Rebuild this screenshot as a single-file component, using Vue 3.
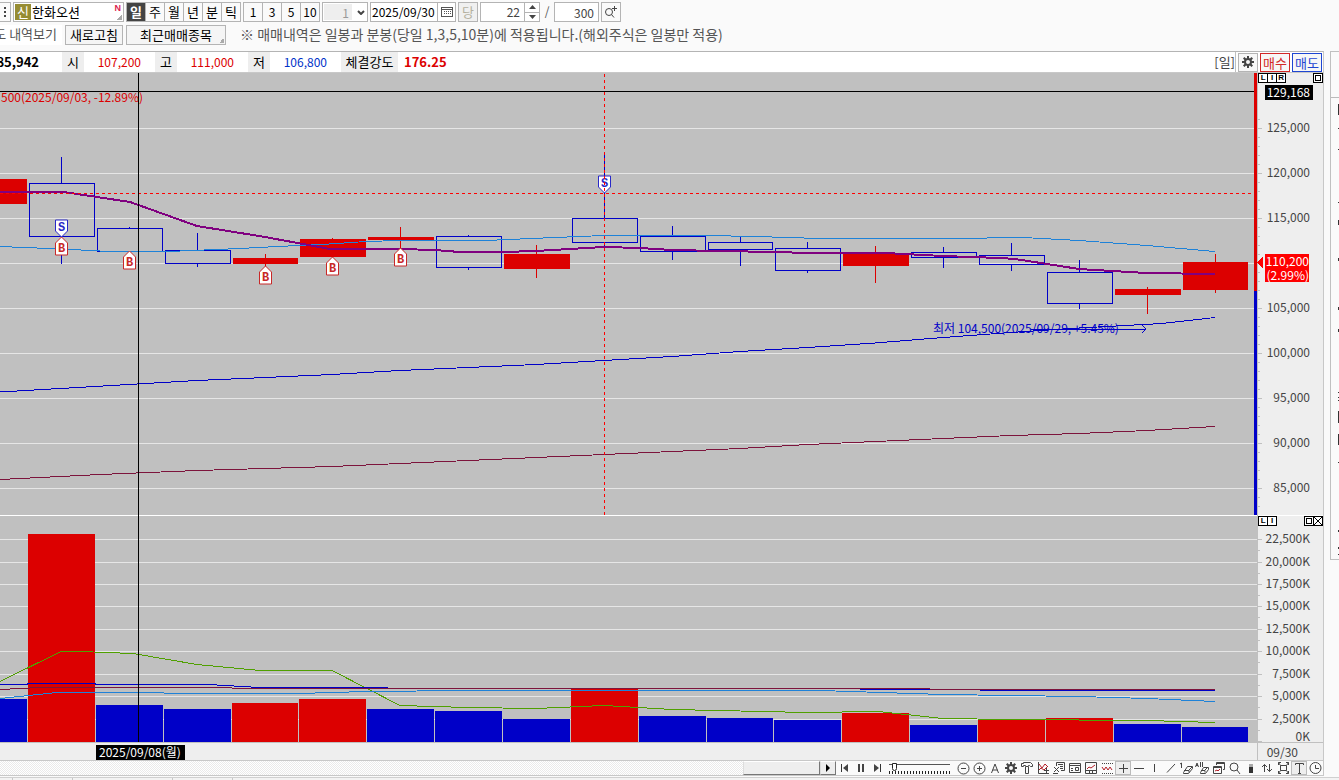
<script setup>
const periods = ['일', '주', '월', '년', '분', '틱']
const minutes = ['1', '3', '5', '10']
const quotes = [
  { label: '시', value: '107,200', tone: 'up' },
  { label: '고', value: '111,000', tone: 'up' },
  { label: '저', value: '106,800', tone: 'down' },
]

// x, width, body top, body bottom, wick x, high, low, direction
const candles = [
  [0, 27, 179, 204, 0, 179, 204, 'up'],
  [29, 66, 183, 237, 61, 157, 264, 'down'],
  [97, 66, 228, 252, 129, 227, 252, 'down'],
  [165, 66, 250, 264, 197, 233, 267, 'down'],
  [233, 65, 258, 264, 265, 254, 268, 'up'],
  [300, 66, 239, 257, 332, 238, 257, 'up'],
  [368, 66, 237, 240, 400, 227, 250, 'up'],
  [436, 66, 236, 268, 468, 235, 270, 'down'],
  [504, 66, 254, 269, 536, 245, 278, 'up'],
  [572, 66, 218, 243, 604, 154, 247, 'down'],
  [640, 66, 236, 252, 672, 226, 260, 'down'],
  [708, 65, 242, 250, 740, 237, 266, 'down'],
  [775, 66, 248, 271, 807, 242, 273, 'down'],
  [843, 66, 253, 266, 875, 246, 283, 'up'],
  [911, 66, 252, 258, 943, 247, 268, 'down'],
  [979, 66, 255, 265, 1011, 243, 271, 'down'],
  [1047, 66, 272, 304, 1079, 260, 309, 'down'],
  [1115, 66, 289, 295, 1147, 287, 314, 'up'],
  [1183, 65, 262, 290, 1215, 254, 293, 'up'],
].map(([x, w, top, bottom, cx, high, low, dir]) => ({ x, w, top, bottom, cx, high, low, dir }))

const volumes = [
  [0, 27, 699, 'down'], [28, 67, 534, 'up'], [96, 67, 705, 'down'], [164, 67, 709, 'down'],
  [232, 66, 703, 'up'], [299, 67, 699, 'up'], [367, 67, 709, 'down'], [435, 67, 711, 'down'],
  [503, 67, 719, 'down'], [571, 67, 689, 'up'], [639, 67, 716, 'down'], [707, 66, 718, 'down'],
  [774, 67, 720, 'down'], [842, 67, 713, 'up'], [910, 67, 725, 'down'], [978, 67, 720, 'up'],
  [1046, 67, 718, 'up'], [1114, 67, 724, 'down'], [1182, 66, 727, 'down'],
].map(([x, w, y, dir]) => ({ x, w, y, dir }))

const priceTicks = ['125,000', '120,000', '115,000', '', '105,000', '100,000', '95,000', '90,000', '85,000']
  .map((label, i) => ({ label, y: 128 + i * 45 }))
const minorTicks = Array.from({ length: 45 }, (_, i) => 119 + i * 9).filter((y) => y < 512)
const volumeTicks = [
  ['22,500K', 539], ['20,000K', 562], ['17,500K', 584], ['15,000K', 606], ['12,500K', 629],
  ['10,000K', 651], ['7,500K', 674], ['5,000K', 696], ['2,500K', 719],
].map(([label, y]) => ({ label, y }))

const markers = [
  { kind: 'B', x: 61, y: 237 },
  { kind: 'S', x: 61, y: 237 },
  { kind: 'B', x: 129, y: 251 },
  { kind: 'B', x: 265, y: 266 },
  { kind: 'B', x: 332, y: 257 },
  { kind: 'B', x: 400, y: 248 },
  { kind: 'S', x: 604, y: 193 },
]
const slivers = [[103, 11], [127, 1], [148, 1], [201, 1], [219, 5], [257, 3], [306, 3], [328, 3], [391, 1], [396, 1], [399, 1], [410, 12], [433, 11], [461, 1], [529, 2], [546, 2], [553, 1]]
const gear = 'M5 0h2v2l1 .4L9.500 1 11 2.500 9.600 4 10 5h2v2h-2l-.4 1L11 9.500 9.500 11 8 9.600 7 10v2H5v-2l-1-.4L2.500 11 1 9.500 2.400 8 2 7H0V5h2l.4-1L1 2.500 2.500 1 4 2.400 5 2zM6 4a2 2 0 1 0 0 4a2 2 0 0 0 0-4z'
</script>

<template>
  <div class="app">
    <header class="controls">
      <div class="row tight">
        <button class="box grip" aria-label="메뉴"><i></i><i></i><i></i></button>
        <button class="box stock">
          <span class="credit">신</span><span>한화오션</span><sup>N</sup><span class="corner"></span>
        </button>
        <div class="group">
          <button v-for="(p, i) in periods" :key="p" class="seg" :class="{ active: i === 0 }">{{ p }}</button>
        </div>
        <div class="group">
          <button v-for="m in minutes" :key="m" class="seg num">{{ m }}</button>
        </div>
        <div class="box combo">
          <select aria-label="주기"><option>1</option></select>
          <svg width="8" height="5" viewBox="0 0 8 5"><path d="M1 1l3 3 3-3" fill="none" stroke="#444" stroke-width="2" /></svg>
        </div>
        <div class="box date">
          <input aria-label="조회일자" value="2025/09/30" />
          <button aria-label="달력">
            <svg width="12" height="12" viewBox="0 0 12 12" fill="none" stroke="#555" shape-rendering="crispEdges">
              <rect x=".5" y="1.500" width="11" height="9" /><path d="M0 3.500h12M3 5.500h1m1 0h1m1 0h1m1 0h1M3 7.500h1m1 0h1m1 0h1m1 0h1" />
            </svg>
          </button>
        </div>
        <button class="box today" disabled>당</button>
        <div class="box spin">
          <input aria-label="표시 개수" value="22" />
          <div class="steps">
            <button aria-label="증가"><svg width="7" height="4"><path d="M3.500 0L7 4H0z" fill="#444" /></svg></button>
            <button aria-label="감소"><svg width="7" height="4"><path d="M0 0h7L3.500 4z" fill="#444" /></svg></button>
          </div>
        </div>
        <span class="slash">/</span>
        <input class="box total" aria-label="전체 개수" value="300" />
        <button class="box find" aria-label="확대 조회">
          <svg width="14" height="14" viewBox="0 0 14 14" fill="none" stroke="#444"><circle cx="5" cy="7" r="3.500" /><path d="M7.500 9.500L10 12.500M8 3.500h5M10.500 1v5" /></svg>
        </button>
      </div>
      <div class="row">
        <span class="history">도 내역보기</span>
        <button class="box refresh">새로고침</button>
        <button class="box recent">최근매매종목<span class="corner"></span></button>
        <span class="note">※ 매매내역은 일봉과 분봉(당일 1,3,5,10분)에 적용됩니다.(해외주식은 일봉만 적용)</span>
      </div>
    </header>

    <div class="body">
      <main class="main">
        <div class="info">
          <b class="volume">85,942</b>
          <template v-for="q in quotes" :key="q.label">
            <span class="tag">{{ q.label }}</span><span class="quote" :class="q.tone">{{ q.value }}</span>
          </template>
          <span class="tag wide">체결강도</span><b class="strength">176.25</b>
          <div class="actions">
            <span class="unit">[일]</span>
            <button class="setup" aria-label="설정"><svg width="12" height="12" viewBox="0 0 12 12"><path :d="gear" fill="#444" fill-rule="evenodd" /></svg></button>
            <button class="buy">매수</button>
            <button class="sell">매도</button>
          </div>
        </div>

        <div class="chart">
          <svg class="plot" viewBox="0 73 1323 687" shape-rendering="crispEdges" role="img" aria-label="한화오션 일봉 차트">
            <rect x="0" y="73" width="1257" height="669" class="ground" />
            <rect x="1257" y="73" width="66" height="687" class="axis" />
            <rect x="0" y="742" width="1323" height="18" class="axis" />
            <g class="grid">
              <path v-for="t in priceTicks" :key="t.y" :d="`M0 ${t.y + .5}H1254`" />
              <path v-for="t in volumeTicks" :key="t.y" :d="`M0 ${t.y + .5}H1257`" />
            </g>
            <path d="M0 515.500H1323" stroke="#fff" />

            <g v-for="c in candles" :key="c.x" :class="c.dir">
              <path v-if="c.cx" :d="`M${c.cx + .5} ${c.high}V${c.top}M${c.cx + .5} ${c.bottom}V${c.low}`" class="wick" />
              <rect v-if="c.dir === 'up'" :x="c.x" :y="c.top" :width="c.w" :height="c.bottom - c.top" class="fill" />
              <rect v-else :x="c.x + .5" :y="c.top + .5" :width="c.w - 1" :height="c.bottom - c.top - 1" class="hollow" />
            </g>
            <rect v-for="v in volumes" :key="v.x" :x="v.x" :y="v.y" :width="v.w" :height="742 - v.y" class="fill" :class="v.dir" />

            <g fill="none">
              <polyline stroke="#1e82d8" points="0,246.500 61,249 100,251 180,251 240,248.500 277,246.500 322,244.500 366,241.500 400,240.500 485,240.500 520,239 555,237.500 604,235.500 706,235.500 755,236.500 820,238.500 975,238.500 1000,237.500 1023,237.500 1079,240.500 1147,245.500 1215,251.500" />
              <polyline stroke="#0000c8" points="0,392 129,384.500 197,380.500 265,377.500 332,374.500 400,370.500 468,367.500 536,364.500 604,360.500 672,356.500 740,351.500 808,347.500 875,343 943,337.500 1011,332.500 1070,328.500 1162,323.500 1215,317.500" />
              <polyline stroke="#7d143c" points="0,479.500 100,474.500 197,470.500 332,466.500 400,463.500 468,460.500 604,454.500 672,451.500 740,448.500 808,444.500 943,438.500 1011,435.500 1079,433.500 1147,430.500 1215,426.500" />
              <polyline stroke="#800080" stroke-width="2" points="0,192 64,192 130,202 197,226 265,237 330,249 400,249 434,250 460,252 502,252 536,251 570,249 604,247 640,248 672,250 720,251 775,252 808,253 885,253 943,256 1000,258 1015,259 1079,269 1112,271 1147,273 1215,274" />
              <polyline stroke="#50a000" points="0,681.500 61,651.500 80,651.500 133,653.500 197,664.500 260,670.500 332,670.500 400,705.500 468,707.500 536,708.500 604,705.500 672,709.500 808,712.500 878,711.500 943,718.500 1011,719.500 1147,720.500 1215,722.500" />
              <polyline stroke="#0000c8" points="0,684.500 27,684.500 28,683.500 95,683.500 96,684.500 208,684.500 260,687.500 366,687.500 410,688.500 800,688.500 980,690 1215,690" />
              <polyline stroke="#7d143c" points="0,689.500 40,687.500 231,687.500 233,688.500 880,688.500 980,689.500 1215,689.500" />
              <polyline stroke="#1e82d8" points="0,698.500 57,692.500 163,692.500 165,693.500 298,693.500 366,691.500 468,690.500 820,690.500 943,694.500 1079,696.500 1147,698.500 1215,701.500" />
              <path d="M980 690.500H1215" stroke="#0000c8" />
            </g>

            <path d="M0 193.500H1254" stroke="#f00" stroke-dasharray="3 3" />
            <g v-for="m in markers" :key="m.kind + m.x" :class="['marker', m.kind]" shape-rendering="auto">
              <path v-if="m.kind === 'B'" :d="`M${m.x + .5} ${m.y}l6 6v12h-12v-12z`" />
              <path v-else :d="`M${m.x + .5} ${m.y}l6-6v-11h-12v11z`" />
              <text :x="m.x + .5" :y="m.kind === 'B' ? m.y + 15 : m.y - 6" text-anchor="middle">{{ m.kind }}</text>
            </g>
            <path d="M604.500 74V515" stroke="#f00" stroke-dasharray="3 3" />

            <text x="1" y="102" class="high">500(2025/09/03, -12.89%)</text>
            <text x="933" y="333" class="low">최저 104,500(2025/09/29, +5.45%)</text>
            <path d="M1031 329.500H1146M1142 325l4 4-4 4" fill="none" stroke="#0000c8" />

            <path d="M0 91.500H1257M138.500 73V743" stroke="#000" />
            <rect x="1254" y="73" width="3" height="218" fill="#dc0000" />
            <rect x="1254" y="291" width="3" height="224" fill="#0000c8" />

            <g class="ticks">
              <path d="M1257.500 73V760M0 742.500H1323M1257 741.500h5" />
              <path v-for="y in minorTicks" :key="y" :d="`M1258 ${y + .5}h2`" />
              <path v-for="t in priceTicks" :key="t.y" :d="`M1258 ${t.y + .5}h4`" />
              <path v-for="t in volumeTicks" :key="t.y" :d="`M1258 ${t.y + .5}h4M1258 ${t.y + 11.5}h2`" />
            </g>
            <g class="scale">
              <text v-for="t in priceTicks" :key="t.y" x="1310" :y="t.y + 4">{{ t.label }}</text>
              <text v-for="t in volumeTicks" :key="t.y" x="1310" :y="t.y + 4">{{ t.label }}</text>
              <text x="1310" y="741">0K</text>
              <text x="1298" y="757">09/30</text>
            </g>
            <rect x="1265" y="85" width="48" height="15" />
            <path d="M1257 262.500l6-6v12z" fill="#f00" />
            <rect x="1265" y="254" width="44" height="28" fill="#f00" />
            <g class="scale inverse">
              <text x="1310" y="97">129,168</text>
              <text x="1309" y="266">110,200</text>
              <text x="1309" y="280">(2.99%)</text>
            </g>
            <rect x="96" y="745" width="89" height="16" />
            <text x="99" y="757" class="cursor">2025/09/08(월)</text>
          </svg>
          <div class="pane-tools upper">
            <button>L</button><button>I</button><button>R</button><button class="last" aria-label="최대화"><i></i></button>
          </div>
          <div class="pane-tools lower">
            <button>L</button><button>I</button><button class="last" aria-label="최대화"><i></i></button>
            <button aria-label="닫기"><svg width="8" height="8"><path d="M0 0l8 8M8 0L0 8" stroke="#000" /></svg></button>
          </div>
        </div>

        <div class="toolbar">
          <div class="track"></div>
          <button class="thumb" aria-label="스크롤"></button>
          <button class="arrow" aria-label="오른쪽"><svg width="5" height="8"><path d="M0 0l4 4-4 4z" /></svg></button>
          <div class="play">
            <button aria-label="처음"><svg viewBox="0 0 16 14"><path d="M4.500 3v8" stroke="#333" /><path d="M11 3v8L6 7z" fill="#444" /></svg></button>
            <button aria-label="일시정지"><svg viewBox="0 0 16 14"><path d="M5 3h2v8H5zM9 3h2v8H9z" fill="#444" /></svg></button>
            <button aria-label="끝"><svg viewBox="0 0 16 14"><path d="M11.500 3v8" stroke="#333" /><path d="M5 3v8l5-4z" fill="#444" /></svg></button>
          </div>
          <div class="speed">
            <input type="range" min="0" max="20" value="1" aria-label="속도" />
          </div>
          <div class="icons">
            <button aria-label="축소"><svg viewBox="0 0 16 14"><circle cx="8.500" cy="7.500" r="5.500" /><path d="M6 7.500h5" /></svg></button>
            <button aria-label="확대"><svg viewBox="0 0 16 14"><circle cx="8.500" cy="7.500" r="5.500" /><path d="M6 7.500h5M8.500 5v5" /></svg></button>
            <button aria-label="글자"><svg viewBox="0 0 16 14"><path d="M4.500 12L8 3l3.500 9M5.500 9h5" /></svg></button>
            <button aria-label="환경설정"><svg viewBox="0 0 16 14"><path transform="translate(2 1)" :d="gear" fill="#444" stroke="none" fill-rule="evenodd" /></svg></button>
            <button aria-label="도구"><svg viewBox="0 0 16 14"><path d="M2.500 2.500h2v-1h7l2 2v2h-2l-1-1h-1v1h-3v-1h-2v1h-2zM6.500 6v6.500h3V6" /></svg></button>
            <button aria-label="지표 추가"><svg viewBox="0 0 16 14"><path d="M3.500 1v11.500H14M9 9.500h5M11.500 7v5" /><path class="red" d="M4 3l3 4 3-4 2 2M4 9l2-2 3 2 4-4" /></svg></button>
            <button aria-label="복사"><svg viewBox="0 0 16 14"><path d="M5.500 5V1.500h8v8H10M7 3.500h5M9 5.500h3M9 7.500h3M3 6l5 5M8 6l-5 5M2 12.500h5" /></svg></button>
            <button aria-label="양식"><svg viewBox="0 0 16 14"><path d="M2.500 2.500h11v9h-11zM2 4.500h12M4 7.500h2M4 9.500h2M8.500 6.500h3v3h-3z" /></svg></button>
            <button aria-label="차트"><svg viewBox="0 0 16 14"><path d="M2.500 1.500h11v11h-11zM3 9.500h10M6.500 10v2M9.500 10v2" /><path class="red" d="M4 8l2-2 2 1 4-3" /></svg></button>
            <button aria-label="구간"><svg viewBox="0 0 16 14"><path stroke-dasharray="1 1" d="M3 2.500h11M3 12.500h11" /><path class="red" d="M3 6l2 3 2-3 2 3 2-3 2 3" /></svg></button>
            <button class="on" aria-label="십자선"><svg viewBox="0 0 16 14"><path d="M4 7.500h9M8.500 3v9" /></svg></button>
            <button aria-label="수평선"><svg viewBox="0 0 16 14"><path d="M3 7.500h10" /></svg></button>
            <button aria-label="수직선"><svg viewBox="0 0 16 14"><path d="M7.500 3v8" /></svg></button>
            <button aria-label="추세선"><svg viewBox="0 0 16 14"><path d="M4 11.500L12 3" /></svg></button>
            <button aria-label="하나 지우기"><svg viewBox="0 0 16 14"><path d="M1 3l1.500-1v5M4.500 11.500l4-6h5v2l-4 5h-5zM5 9.500h5v2M10 9l3-3" /></svg></button>
            <button aria-label="모두 지우기"><svg viewBox="0 0 16 14"><path d="M.5 6L2 2l1.500 4M1 4.500h2M5.500 1v5M7.500 1v5M5.500 11.500l3-5h5v2l-3 4h-5zM6 9.500h4v2M10 9l3-3" /></svg></button>
            <button aria-label="창 배열"><svg viewBox="0 0 16 14"><path d="M5.500 4V1.500h8v7H12M6 2.500h7M2.500 5.500h8v7h-8zM3 6.500h7" /><path class="red" d="M4 10l2-1 1 1 2-2" /></svg></button>
            <button aria-label="돋보기"><svg viewBox="0 0 16 14"><circle cx="7" cy="6" r="4" /><path d="M10 9l3 4" /></svg></button>
            <button aria-label="색상"><svg viewBox="0 0 16 14"><path d="M6 3h4v3H6z" fill="#aaa" stroke="none" /><path d="M6 6h4v6H6z" fill="#333" stroke="none" /></svg></button>
            <button aria-label="전환"><svg viewBox="0 0 16 14"><path d="M5.500 11V3.500M3 6l2.500-2.500L8 6M10.500 3v7.500M8 8l2.500 2.500L13 8" /></svg></button>
            <button aria-label="전체화면"><svg viewBox="0 0 16 14"><path d="M3.500 4V1.500H6M11 1.500h2.500V4M13.500 10v2.500H11M6 12.500H3.500V10M5.500 4.500h6v5h-6zM3.500 1.500l2 3M13.500 1.500l-2 3M3.500 12.500l2-3M13.500 12.500l-2-3" /></svg></button>
            <button class="on" aria-label="텍스트"><svg viewBox="0 0 16 14"><path d="M4.500 4V2.500h8V4M8.500 3v9M7 12.500h3" /></svg></button>
            <button aria-label="시간"><svg viewBox="0 0 16 14"><circle cx="8.500" cy="7" r="5.500" /><path d="M8.500 4v3.500H12" /></svg></button>
          </div>
        </div>
      </main>
      <aside class="side">
        <svg width="8" height="508" viewBox="0 51 8 508" shape-rendering="crispEdges">
          <path d="M0 96.500H8" stroke="#bbb" />
          <rect v-for="s in slivers" :key="s[0]" x="7" :y="s[0]" width="1" :height="s[1]" fill="#333" />
        </svg>
      </aside>
    </div>
    <footer class="footer"><i></i><i></i><i></i><i></i></footer>
  </div>
</template>

<style>
body { background: #fafafa; }
</style>

<style scoped>
.app { min-height: 100vh; overflow: hidden; display: flex; flex-direction: column; background: #fafafa; color: #000; font: 13px/18px "Noto Sans CJK KR", sans-serif; }
* { box-sizing: border-box; }
button, input, select { font: inherit; color: inherit; margin: 0; padding: 0; border: 0; border-radius: 0; background: none; outline: 0; }
button { display: flex; align-items: center; justify-content: center; white-space: nowrap; }
.controls { height: 51px; padding-top: 2px; display: flex; flex-direction: column; gap: 3px; }
.row { height: 20px; display: flex; gap: 3px; white-space: nowrap; }
.tight { gap: 2px; }
.box { flex: none; height: 20px; border: 1px solid #b4b4b4; position: relative; }
.grip { width: 11px; border-left: 0; flex-direction: column; gap: 2px; }
.grip i { width: 2px; height: 2px; background: #444; }
.stock { width: 111px; background: #fff; justify-content: flex-start; gap: 1px; padding-left: 1px; }
.credit { width: 16px; height: 16px; line-height: 15px; background: #968c32; color: #fff; }
.stock sup { position: absolute; right: 2px; top: 0; color: #dc1e50; font: bold 9px/10px "Liberation Sans", sans-serif; }
.corner { position: absolute; right: 1px; bottom: 1px; width: 5px; height: 5px; background: linear-gradient(135deg, transparent 50%, #aaa 50%); }
.group { display: flex; border: solid #b4b4b4; border-width: 1px 0 1px 1px; flex: none; }
.seg { width: 19px; border-right: 1px solid #b4b4b4; }
.seg.active { background: #444; color: #fff; font-weight: bold; }
.num, .combo, .date, .spin, .total, .slash { font-size: 12px; }
.combo { width: 46px; display: flex; align-items: center; background: #fff; padding: 1px; }
.combo select { appearance: none; width: 28px; height: 16px; background: #eee; color: #999; padding-right: 3px; text-align: right; text-align-last: right; }
.combo svg { margin-left: 5px; }
.date { width: 86px; display: flex; background: #fff; }
.date input { width: 66px; padding-left: 1px; }
.date button { flex: 1; border-left: 1px solid #b4b4b4; }
.today { width: 20px; background: #f0f0f0; color: #b4b0a0; }
.spin { width: 60px; display: flex; background: #fff; }
.spin input { width: 43px; padding-right: 4px; text-align: right; color: #444; }
.steps { flex: 1; display: flex; flex-direction: column; border-left: 1px solid #b4b4b4; }
.steps button { flex: 1; }
.steps button + button { border-top: 1px solid #b4b4b4; }
.slash { width: 10px; text-align: center; color: #555; }
.total { width: 45px; padding-right: 4px; text-align: right; background: #fff; color: #444; }
.find { width: 20px; }
.history { width: 62px; overflow: hidden; display: flex; justify-content: flex-end; padding-right: 5px; color: #555; background: #fff; }
.refresh { width: 58px; background: #f5f5f5; }
.recent { width: 100px; background: #f5f5f5; }
.note { margin-left: 11px; color: #555; font-size: 14px; }

.body { display: flex; }
.main { flex: 1; min-width: 0; border-top: 1px solid #b4b4b4; border-right: 1px solid #c8c8c8; }
.side { flex: none; width: 9px; height: 509px; margin-left: 6px; border: solid #c0c0c0; border-width: 1px 0 1px 1px; overflow: hidden; }
.side svg { display: block; }
.info { height: 21px; display: flex; background: #fff; border-bottom: 1px solid #c8c8c8; font-size: 12px; line-height: 19px; white-space: nowrap; }
.volume { width: 62px; display: flex; justify-content: flex-end; padding-right: 23px; overflow: hidden; font-size: 13px; }
.tag { width: 22px; text-align: center; background: #eee; font-size: 13px; }
.wide { width: 57px; }
.quote { width: 71px; padding-right: 14px; text-align: right; }
.quote.up, .strength { color: #dc0000; }
.quote.down { color: #0032c8; }
.strength { padding-left: 6px; font-size: 13px; }
.actions { margin-left: auto; display: flex; gap: 2px; }
.unit { border-right: 1px solid #c0c0c0; color: #444; font-size: 13px; }
.setup, .buy, .sell { height: 19px; align-self: center; border: 1px solid #b4b4b4; width: 20px; font-size: 13px; background: #f7f7f7; }
.buy, .sell { width: 30px; }
.buy { color: #d22828; border-color: #d22828; }
.sell { color: #1e46d2; border-color: #1e46d2; margin-right: 1px; }

.chart { position: relative; }
.plot { display: block; width: 100%; height: auto; font-size: 12px; }
.ground { fill: #c0c0c0; }
.axis { fill: #eee; }
.grid path { stroke: #e6e6e6; }
.ticks path { stroke: #c0c0c0; }
.up.fill, .up .fill { fill: #dc0000; }
.up .wick { stroke: #dc0000; }
.down.fill { fill: #0000c8; }
.down .hollow, .down .wick { fill: none; stroke: #0000c8; }
.marker path { fill: #fff; stroke: currentColor; }
.marker text { fill: currentColor; font: bold 12px "Liberation Mono", monospace; }
.B { color: #c82828; }
.S { color: #2828c8; }
.high { fill: #dc0000; }
.low { fill: #0000c8; }
.scale { fill: #444; text-anchor: end; }
.inverse, .cursor { fill: #fff; }
.pane-tools { position: absolute; left: 95.100%; right: 0; display: flex; font: bold 8px/8px "Liberation Sans", sans-serif; }
.upper { top: 0; }
.lower { top: 64.500%; }
.pane-tools button { width: 10px; height: 10px; border: 1px solid #000; background: #fff; margin-right: -1px; overflow: hidden; }
.pane-tools .last { margin-left: auto; }
.upper .last { margin-right: 0; }
.pane-tools button:last-child { margin-right: 0; }
.pane-tools i { width: 6px; height: 6px; border: 1px solid #000; }

.toolbar { height: 16px; display: flex; align-items: center; background: #fafafa; border: solid #c8c8c8; border-width: 1px 0; }
.track { flex: 1; align-self: stretch; background: repeating-conic-gradient(#eaeaea 0 25%, #fff 0 50%) 0 0 / 2px 2px; }
.thumb { width: 77px; }
.arrow { width: 16px; }
.thumb, .arrow { height: 14px; background: #eee; border: 1px solid; border-color: #fff #777 #777 #ddd; }
.play { display: flex; margin-left: 1px; }
.play button, .icons button { width: 16px; height: 14px; }
.play svg, .icons svg { width: 16px; height: 14px; flex: none; }
.icons { display: flex; }
.icons svg { fill: none; stroke: #444; }
.icons .red { stroke: #b41e28; }
.icons .on { background: #eee; box-shadow: inset 0 0 0 1px #bbb; }
.speed { width: 70px; padding: 0 4px; height: 14px; }
.speed input { appearance: none; display: block; width: 61px; height: 14px; background: linear-gradient(#555, #555) 0 3px / 100% 1px no-repeat, repeating-linear-gradient(90deg, #222 0 1px, transparent 1px 3px) 0 10px / 100% 3px no-repeat; }
.speed input::-webkit-slider-thumb { appearance: none; width: 5px; height: 8px; margin-top: -2px; background: #fff; border: 1px solid #222; border-radius: 0 0 3px 3px; }
.footer { flex: 1; margin-top: 1px; display: flex; background: #f3f3f3; border-top: 1px solid #d0d0d0; }
.footer i { border-right: 1px solid #c8c8c8; width: 60px; }
.footer i:first-child { width: 13px; }
.footer i:nth-child(3) { width: 100px; }
</style>
